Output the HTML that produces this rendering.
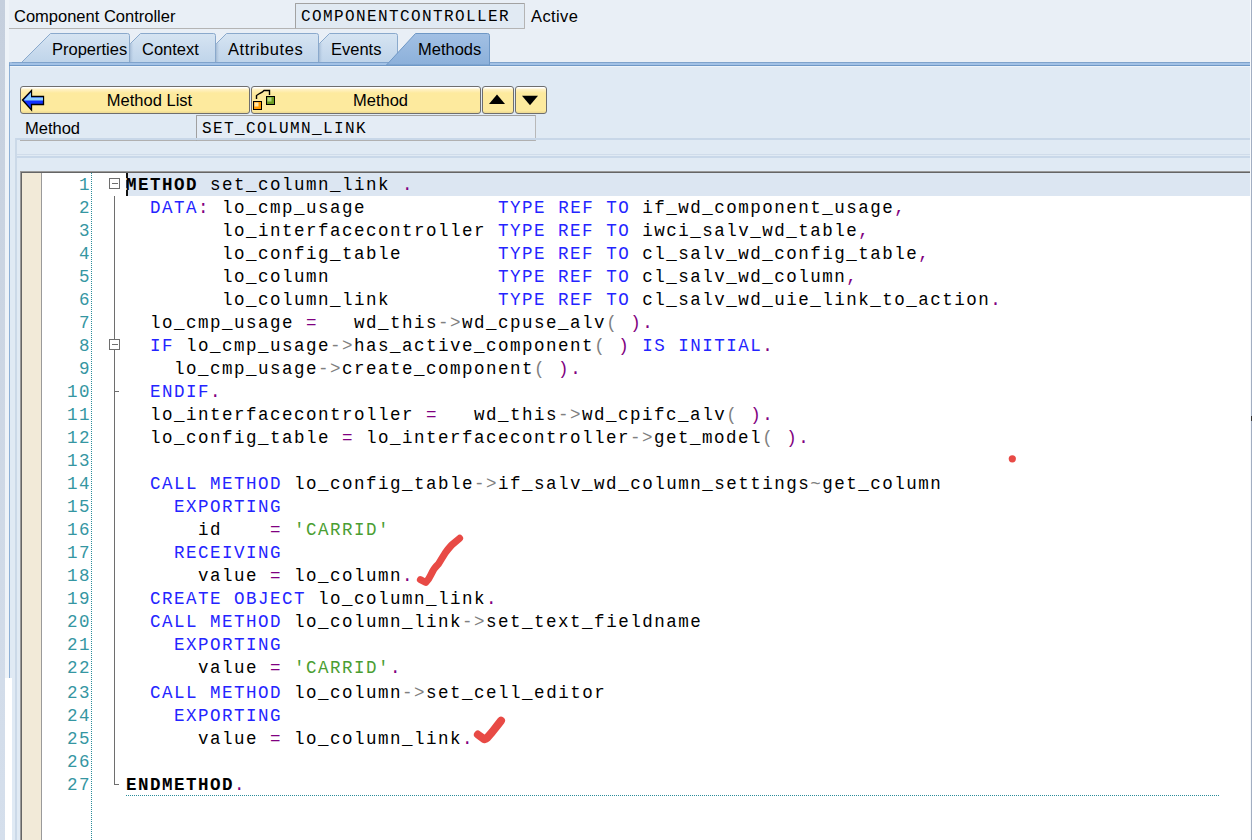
<!DOCTYPE html>
<html><head><meta charset="utf-8">
<style>
*{margin:0;padding:0;box-sizing:border-box}
html,body{width:1252px;height:840px;overflow:hidden;background:#e9eff6;position:relative;font-family:"Liberation Sans",sans-serif;}
.a{position:absolute}
.ui{font-family:"Liberation Sans",sans-serif;font-size:16.5px;color:#000;line-height:20px;white-space:nowrap}
.mono{font-family:"Liberation Mono",monospace;white-space:pre}
.btn{position:absolute;top:86px;height:28px;border:1px solid #6e6e6e;border-radius:3px;background:linear-gradient(#ffffff 0px,#ffffff 1px,#fff3c8 2px,#fff0be 3px,#fdea9e 6px,#fdea9e 24px,#efdc94 25px);}
.btn .t{position:absolute;top:3px;left:29px;right:0;text-align:center}
/*ED*/
.nums{font-size:17.5px;letter-spacing:1.5px;line-height:23px;color:#3596a2}
.code{font-size:17.5px;letter-spacing:1.5px;line-height:23px;color:#000}
.code i{font-style:normal}
.code .k{color:#2424ff}
.code .p{color:#800080}
.code .o{color:#808080}
.code .s{color:#4a9e32}
.code b{font-weight:bold}
/*EDEND*/</style></head><body>
<!-- left strips -->
<div class="a" style="left:0;top:0;width:5px;height:840px;background:linear-gradient(#c5cfdd,#d5dfec)"></div>
<div class="a" style="left:5px;top:0;width:4px;height:678px;background:#eef3f8"></div>

<!-- header row -->
<div class="a ui" style="left:14px;top:6px">Component Controller</div>
<div class="a" style="left:9px;top:28px;width:287px;height:1px;background:#b4b4b4"></div>
<div class="a" style="left:295px;top:3px;width:230px;height:26px;background:#e1eaf3;border:1px solid #b4b4b4;border-top-color:#a2a2a2;border-left-color:#a2a2a2;border-radius:1px"></div>
<div class="a mono" style="left:301px;top:6px;font-size:16px;letter-spacing:1.4px;line-height:22px;color:#000">COMPONENTCONTROLLER</div>
<div class="a ui" style="left:531px;top:6px;letter-spacing:0.4px">Active</div>

<!-- panel -->
<div class="a" style="left:9px;top:62px;width:1243px;height:778px;background:#e0eaf4;border-left:1px solid #8eb0d6;"></div>

<!-- tabs -->
<svg class="a" style="left:0;top:0" width="1252" height="70">
<defs>
<linearGradient id="gi" x1="0" y1="0" x2="0" y2="1"><stop offset="0" stop-color="#d6e4f2"/><stop offset="1" stop-color="#bfd4ea"/></linearGradient>
<linearGradient id="ga" x1="0" y1="0" x2="0" y2="1"><stop offset="0" stop-color="#a2c0e4"/><stop offset="1" stop-color="#8cb0da"/></linearGradient>
</defs>
<path d="M300.5,62.5 L329.5,33.5 L395.5,33.5 Q397.5,33.5 397.5,35.5 L397.5,62.5 Z" fill="url(#gi)" stroke="#8aa9cc"/>
<path d="M197.5,62.5 L226.5,33.5 L316.5,33.5 Q318.5,33.5 318.5,35.5 L318.5,62.5 Z" fill="url(#gi)" stroke="#8aa9cc"/>
<path d="M111.5,62.5 L140.5,33.5 L213.5,33.5 Q215.5,33.5 215.5,35.5 L215.5,62.5 Z" fill="url(#gi)" stroke="#8aa9cc"/>
<path d="M21.5,62.5 L50.5,33.5 L127.5,33.5 Q129.5,33.5 129.5,35.5 L129.5,62.5 Z" fill="url(#gi)" stroke="#8aa9cc"/>
<defs><linearGradient id="sh" x1="0" y1="0" x2="1" y2="0"><stop offset="0" stop-color="#9fb6d0" stop-opacity="0.9"/><stop offset="1" stop-color="#bcd2ea" stop-opacity="0"/></linearGradient></defs>
<rect x="130" y="43" width="4" height="19" fill="url(#sh)"/>
<rect x="216" y="43" width="4" height="19" fill="url(#sh)"/>
<rect x="319" y="43" width="4" height="19" fill="url(#sh)"/>
<!-- panel top bar -->
<path d="M9.5,66 L9.5,64.5 Q9.5,62.5 11.5,62.5 L1252,62.5" fill="none" stroke="#7fa3cc"/>
<rect x="10" y="63" width="1242" height="2" fill="#a3c2e6"/>
<rect x="9" y="65" width="1243" height="1" fill="#6f98c6"/>
<rect x="10" y="66" width="1242" height="1" fill="#eef4fa"/>
<path d="M386.5,65 L415.5,33.5 L487.5,33.5 Q489.5,33.5 489.5,35.5 L489.5,65 Z" fill="url(#ga)" stroke="#6f98c6"/>
</svg>
<div class="a ui" style="left:52px;top:39px">Properties</div>
<div class="a ui" style="left:142px;top:39px">Context</div>
<div class="a ui" style="left:228px;top:39px;letter-spacing:0.55px">Attributes</div>
<div class="a ui" style="left:331px;top:39px">Events</div>
<div class="a ui" style="left:418px;top:39px">Methods</div>

<!-- buttons -->
<div class="btn" style="left:20px;width:230px"><div class="t ui">Method List</div>
<svg class="a" style="left:0px;top:2px" width="26" height="24"><path d="M1.5,11 L10.5,1.5 L10.5,7.5 L22.5,7.5 L22.5,15.5 L10.5,15.5 L10.5,21 Z" fill="#1030ff" stroke="#000" stroke-width="1.3"/><path d="M3,11 L10,3.5 L10,8.5 L22,8.5 L22,11.5 L3.5,11.5 Z" fill="#8ed0ff"/></svg>
</div>
<div class="btn" style="left:251px;width:230px"><div class="t ui">Method</div>
<svg class="a" style="left:-1px;top:0px" width="26" height="24"><rect x="2.5" y="14.5" width="8" height="8" fill="#ff9900" stroke="#000"/><rect x="3.5" y="15.5" width="4" height="4" fill="#ffe8a8"/><rect x="15.5" y="9.5" width="8" height="8" fill="#6b9a22" stroke="#000"/><rect x="16.5" y="10.5" width="4" height="4" fill="#b8d880"/><path d="M5.5,12 L5.5,8.5 L8.5,6.5 L11.5,5 L13,3.5 L14,3.5 L18.5,3.5 L18.5,8" fill="none" stroke="#000" stroke-width="1.4"/></svg>
</div>
<div class="btn" style="left:482px;width:32px"><svg class="a" style="left:5px;top:7px" width="20" height="12"><path d="M1,10 L9,0.6 L17,10 Z" fill="#000"/></svg></div>
<div class="btn" style="left:515px;width:32px"><svg class="a" style="left:5px;top:8px" width="20" height="12"><path d="M1,0.8 L17,0.8 L9,10.2 Z" fill="#000"/></svg></div>

<!-- method field row -->
<div class="a ui" style="left:25px;top:118px">Method</div>
<div class="a" style="left:196px;top:115px;width:340px;height:26px;background:#e4ecf5;border-top:1px solid #a0a0a0;border-left:1px solid #a0a0a0;border-right:1px solid #b8b8b8;border-bottom:1px solid #b0b0b0"></div>
<div class="a mono" style="left:202px;top:118px;font-size:16px;letter-spacing:1.4px;line-height:22px;color:#000">SET_COLUMN_LINK</div>

<!-- frame lines -->
<div class="a" style="left:15px;top:138px;width:1235px;height:702px;border-top:2px solid #c8d7e8;border-left:2px solid #cbd9e8"></div>
<div class="a" style="left:20px;top:140px;width:176px;height:1px;background:#b0b0b0"></div>
<div class="a" style="left:17px;top:154px;width:1233px;height:1px;background:#d0dcea"></div>
<div class="a" style="left:17px;top:156px;width:1233px;height:2px;background:#c9d8e9"></div>
<div class="a" style="left:1250px;top:0px;width:1px;height:840px;background:#f6f9fc"></div><div class="a" style="left:1251px;top:0px;width:1px;height:840px;background:#a2aec2"></div>
<div class="a" style="left:5px;top:678px;width:7px;height:162px;background:#fff"></div>












<!-- code editor -->
<div class="a" style="left:20px;top:171px;width:1230px;height:669px;background:#fff;border-top:1px solid #9a9a9a;border-left:1px solid #9a9a9a"></div><div class="a" style="left:21px;top:172px;width:1229px;height:668px;border-top:1px solid #656565;border-left:1px solid #656565"></div>
<div class="a" style="left:22px;top:173px;width:19px;height:667px;background:#f2ead8"></div>
<div class="a" style="left:41px;top:173px;width:1px;height:667px;background:#9a9a9a"></div>
<div class="a" style="left:91px;top:173px;width:1px;height:667px;background:repeating-linear-gradient(#2a8c9a 0 1px,transparent 1px 2px)"></div>
<div class="a" style="left:126px;top:173px;width:1124px;height:23px;background:#dce6f2"></div>
<div class="a" style="left:126px;top:173px;width:2px;height:5px;background:#111"></div><div class="a" style="left:126px;top:180px;width:2px;height:8px;background:#3a55a8"></div><div class="a" style="left:126px;top:190px;width:2px;height:6px;background:#111"></div>
<svg class="a" style="left:100px;top:170px" width="30" height="630">
<g fill="none" stroke="#6e6e6e" shape-rendering="crispEdges">
<rect x="9.5" y="8.5" width="10" height="10" fill="#fff"/>
<path d="M12,13.5 H17.5"/>
<path d="M14.5,26 V169"/>
<rect x="9.5" y="169.5" width="10" height="10" fill="#fff"/>
<path d="M12,174.5 H17.5"/>
<path d="M14.5,180 V614.5 H19"/>
<path d="M14.5,221.5 H19"/>
</g>
</svg>
<div class="a" style="left:126px;top:795px;width:1094px;height:1px;background:repeating-linear-gradient(90deg,#2a8c9a 0 1px,transparent 1px 2px)"></div>
<pre class="a mono nums" style="left:40px;top:174px;width:51px;text-align:right">1
2
3
4
5
6
7
8
9
10
11
12
13
14
15
16
17
18
19
20
21
22</pre>
<pre class="a mono code" style="left:126px;top:174px"><b>METHOD</b> set_column_link <i class="p">.</i>
  <i class="k">DATA</i><i class="p">:</i> lo_cmp_usage           <i class="k">TYPE</i> <i class="k">REF</i> <i class="k">TO</i> if_wd_component_usage<i class="p">,</i>
        lo_interfacecontroller <i class="k">TYPE</i> <i class="k">REF</i> <i class="k">TO</i> iwci_salv_wd_table<i class="p">,</i>
        lo_config_table        <i class="k">TYPE</i> <i class="k">REF</i> <i class="k">TO</i> cl_salv_wd_config_table<i class="p">,</i>
        lo_column              <i class="k">TYPE</i> <i class="k">REF</i> <i class="k">TO</i> cl_salv_wd_column<i class="p">,</i>
        lo_column_link         <i class="k">TYPE</i> <i class="k">REF</i> <i class="k">TO</i> cl_salv_wd_uie_link_to_action<i class="p">.</i>
  lo_cmp_usage <i class="p">=</i>   wd_this<i class="o">-&gt;</i>wd_cpuse_alv<i class="o">(</i> <i class="p">)</i><i class="p">.</i>
  <i class="k">IF</i> lo_cmp_usage<i class="o">-&gt;</i>has_active_component<i class="o">(</i> <i class="p">)</i> <i class="k">IS</i> <i class="k">INITIAL</i><i class="p">.</i>
    lo_cmp_usage<i class="o">-&gt;</i>create_component<i class="o">(</i> <i class="p">)</i><i class="p">.</i>
  <i class="k">ENDIF</i><i class="p">.</i>
  lo_interfacecontroller <i class="p">=</i>   wd_this<i class="o">-&gt;</i>wd_cpifc_alv<i class="o">(</i> <i class="p">)</i><i class="p">.</i>
  lo_config_table <i class="p">=</i> lo_interfacecontroller<i class="o">-&gt;</i>get_model<i class="o">(</i> <i class="p">)</i><i class="p">.</i>

  <i class="k">CALL</i> <i class="k">METHOD</i> lo_config_table<i class="o">-&gt;</i>if_salv_wd_column_settings<i class="o">~</i>get_column
    <i class="k">EXPORTING</i>
      id    <i class="p">=</i> <i class="s">&#x27;CARRID&#x27;</i>
    <i class="k">RECEIVING</i>
      value <i class="p">=</i> lo_column<i class="p">.</i>
  <i class="k">CREATE</i> <i class="k">OBJECT</i> lo_column_link<i class="p">.</i>
  <i class="k">CALL</i> <i class="k">METHOD</i> lo_column_link<i class="o">-&gt;</i>set_text_fieldname
    <i class="k">EXPORTING</i>
      value <i class="p">=</i> <i class="s">&#x27;CARRID&#x27;</i><i class="p">.</i></pre>
<pre class="a mono nums" style="left:40px;top:682px;width:51px;text-align:right">23
24
25
26
27</pre>
<pre class="a mono code" style="left:126px;top:682px">  <i class="k">CALL</i> <i class="k">METHOD</i> lo_column<i class="o">-&gt;</i>set_cell_editor
    <i class="k">EXPORTING</i>
      value <i class="p">=</i> lo_column_link<i class="p">.</i>

<b>ENDMETHOD</b><i class="p">.</i></pre>
<svg class="a" style="left:0;top:0" width="1252" height="840">
<g fill="none" stroke="#e84a45" stroke-linecap="round" stroke-linejoin="round">
<path d="M420.4,579.6 L425.8,582.5 Q428.5,580 430.8,575 Q434,568 438.3,564.2 Q442,558 445,553.3 Q448,549 451.7,545 L459.6,538.3" stroke-width="7"/>
<path d="M477.9,734.6 L484.3,739.3 Q486,739 487.1,737.9 L492.1,732.1 L497.1,725.7 L501,720.7" stroke-width="8"/>
</g>
<circle cx="1012.3" cy="458.8" r="3.6" fill="#e84a45"/>
</svg>
<div class="a" style="left:1251px;top:416px;width:1px;height:5px;background:#333"></div>
</body></html>
